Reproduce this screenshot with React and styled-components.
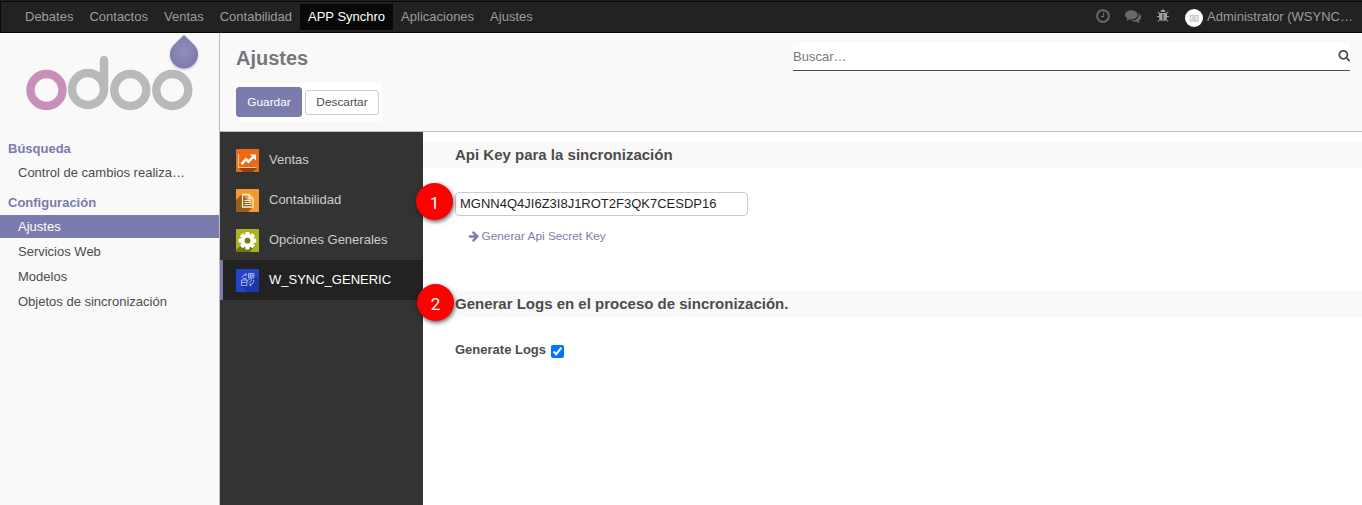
import React from 'react';
import styled, { createGlobalStyle } from 'styled-components';

const GlobalStyle = createGlobalStyle`
  * { box-sizing: border-box; }
  body {
    margin: 0;
    background: #fff;
    color: #4c4c4c;
    font: 13px/20px "Liberation Sans", Arial, sans-serif;
  }
`;

const Page = styled.div`
  display: flex;
  flex-direction: column;
  height: 505px;
  overflow: hidden;
`;

const TopStrip = styled.div`
  flex: none;
  padding-top: 1px;
  background: #222;
`;

const Navbar = styled.nav`
  display: flex;
  justify-content: space-between;
  height: 32px;
  padding: 2px 9px 2px 16px;
  background: #222;
  border: 1px solid #080808;
  border-right: 0;
`;

const NavMenu = styled.div`
  display: flex;
  height: 26px;
`;

const NavItem = styled.a`
  padding: 0 8px;
  line-height: 26px;
  color: ${(p) => (p.$active ? '#fff' : '#9d9d9d')};
  background: ${(p) => (p.$active ? '#080808' : 'transparent')};
`;

const Systray = styled.div`
  display: flex;
  align-items: center;
  height: 26px;
  color: #9d9d9d;
`;

const TrayIcon = styled.span`
  display: flex;
  margin: 0 ${(p) => p.$gap}px 2px 0;
  color: ${(p) => p.$color};
`;

const Avatar = styled.span`
  display: flex;
  width: 18px;
  height: 18px;
  margin: 2px 4px 0 0;
  border-radius: 50%;
  background: #fff;
`;

const Body = styled.div`
  display: flex;
  flex: 1;
  min-height: 0;
`;

const Sidebar = styled.aside`
  flex: none;
  width: 220px;
  background: #f9f9f9;
  border-right: 1px solid #bdbdbd;
`;

const Logo = styled.div`
  height: 103px;
  svg { display: block; }
`;

const SideHeading = styled.div`
  padding: ${(p) => p.$top}px 8px 2px;
  line-height: 20px;
  font-weight: bold;
  color: #7c7bad;
`;

const SideItem = styled.a`
  display: block;
  height: 23px;
  margin-bottom: 2px;
  padding-left: 18px;
  line-height: 23px;
  color: ${(p) => (p.$active ? '#fff' : '#4c4c4c')};
  background: ${(p) => (p.$active ? '#7c7bad' : 'transparent')};
`;

const Main = styled.main`
  display: flex;
  flex-direction: column;
  flex: 1;
  min-width: 0;
`;

const ControlPanel = styled.header`
  display: flex;
  justify-content: space-between;
  flex: none;
  height: 99px;
  padding: 10px 12px 0 16px;
  background: #f9f9f9;
  border-bottom: 1px solid #bdbdbd;
`;

const Title = styled.h1`
  margin: 0 0 10px;
  height: 30px;
  font-size: 20px;
  line-height: 30px;
  color: #777;
`;

const Actions = styled.div`
  display: flex;
  align-items: center;
  gap: 3px;
  width: 146px;
  height: 38px;
  background: #fff;
`;

const Button = styled.button`
  height: ${(p) => (p.$primary ? 30 : 25)}px;
  width: ${(p) => (p.$primary ? 66 : 74)}px;
  padding: 0 0 ${(p) => (p.$primary ? 1 : 0)}px;
  border: 1px solid ${(p) => (p.$primary ? '#7c7bad' : '#ccc')};
  border-radius: 3px;
  background: ${(p) => (p.$primary ? '#7c7bad' : '#fff')};
  color: ${(p) => (p.$primary ? '#fff' : '#4c4c4c')};
  font: 11.84px "Liberation Sans", Arial, sans-serif;
`;

const SearchBox = styled.div`
  display: flex;
  align-items: center;
  justify-content: space-between;
  width: 557px;
  height: 28px;
  background: #fff;
  border-bottom: 1px solid #4c4c4c;
  color: #777;
  svg { margin-bottom: 2px; }
`;

const Content = styled.div`
  display: flex;
  flex: 1;
`;

const TabList = styled.div`
  flex: none;
  width: 203px;
  padding-top: 8px;
  background: #333;
`;

const Tab = styled.div`
  display: flex;
  align-items: center;
  gap: 10px;
  height: 40px;
  padding-left: 13px;
  border-left: 3px solid ${(p) => (p.$active ? '#7c7bad' : 'transparent')};
  background: ${(p) => (p.$active ? '#222' : 'transparent')};
  color: ${(p) => (p.$active ? '#fff' : '#ccc')};
  svg { margin-top: 1px; }
`;

const Settings = styled.section`
  flex: 1;
  padding-top: 10px;
`;

const SectionTitle = styled.h2`
  position: relative;
  height: 26px;
  margin: 0;
  padding-left: 32px;
  background: #f9f9f9;
  font-size: 15px;
  line-height: 26px;
`;

const Field = styled.div`
  position: relative;
  padding: 24px 32px 0;
`;

const KeyInput = styled.input`
  display: block;
  width: 293px;
  height: 24px;
  padding: 0 4px 1px;
  border: 1px solid #ccc;
  border-radius: 4px;
  color: #1f1f1f;
  font: 13px "Liberation Sans", Arial, sans-serif;
`;

const KeyLink = styled.a`
  display: flex;
  align-items: center;
  gap: 1.5px;
  height: 20px;
  margin: 10px 0 45px 13px;
  font-size: 11.84px;
  color: #7c7bad;
`;

const LogField = styled.label`
  display: flex;
  align-items: center;
  gap: 5px;
  height: 20px;
  margin: 23px 0 0 32px;
  font-weight: bold;
`;

const Checkbox = styled.input`
  width: 13px;
  height: 13px;
  margin: 2px 0 0;
`;

const Badge = styled.span`
  position: absolute;
  left: ${(p) => p.$left}px;
  top: ${(p) => p.$top}px;
  width: 37px;
  height: 37px;
  border-radius: 50%;
  background: #f00;
  box-shadow: 1px 2px 4px rgba(0, 0, 0, 0.6);
  color: #fff;
  font: 17px/40px Roboto, sans-serif;
  text-align: center;
`;

const glyphs = {
  clock: 'M1024 544v448q0 14-9 23t-23 9h-320q-14 0-23-9t-9-23v-64q0-14 9-23t23-9h224v-352q0-14 9-23t23-9h64q14 0 23 9t9 23zm416 352q0-148-73-273t-198-198-273-73-273 73-198 198-73 273 73 273 198 198 273 73 273-73 198-198 73-273zm224 0q0 209-103 385.5t-279.5 279.5-385.5 103-385.5-103-279.5-279.5-103-385.5 103-385.5 279.5-279.5 385.5-103 385.5 103 279.5 279.5 103 385.5z',
  comments: 'M1408 768q0 139-94 257t-256.5 186.5-353.5 68.5q-86 0-176-16-124 88-278 128-36 9-86 16h-3q-11 0-20.5-8t-11.5-21q-1-3-1-6.5t.5-6.5 2-6l2.5-5 3.5-5.5 4-5 4.5-5 4-4.5q5-6 23-25t26-29.5 22.5-29 25-38.5 20.5-44q-124-72-195-177t-71-224q0-139 94-257t256.5-186.5 353.5-68.5 353.5 68.5 256.5 186.5 94 257zm384 256q0 120-71 224.5t-195 176.5q10 24 20.5 44t25 38.5 22.5 29 26 29.5 23 25q1 1 4 4.5t4.5 5 4 5 3.5 5.5l2.5 5 2 6 .5 6.5-1 6.5q-3 14-13 22t-22 7q-50-7-86-16-154-40-278-128-90 16-176 16-271 0-472-132 58 4 88 4 161 0 309-45t264-129q125-92 192-212t67-254q0-77-23-152 129 71 204 178t75 230z',
  bug: 'M1696 960q0 26-19 45t-45 19h-224q0 171-67 290l208 209q19 19 19 45t-19 45q-18 19-45 19t-45-19l-198-197q-5 5-15 13t-42 28.5-65 36.5-82 29-97 13v-896h-128v896q-51 0-101.5-13.5t-87-33-66-39-43.5-32.5l-15-14-183 207q-20 21-48 21-24 0-43-16-19-18-20.5-44.5t15.5-46.5l202-227q-58-114-58-274h-224q-26 0-45-19t-19-45 19-45 45-19h224v-294l-173-173q-19-19-19-45t19-45 45-19 45 19l173 173h844l173-173q19-19 45-19t45 19 19 45-19 45l-173 173v294h224q26 0 45 19t19 45zm-480-576h-640q0-133 93.5-226.5t226.5-93.5 226.5 93.5 93.5 226.5z',
  arrow: 'M1600 960q0 54-37 91l-651 651q-39 37-91 37-51 0-90-37l-75-75q-38-38-38-91t38-91l293-293h-704q-52 0-84.5-37.5t-32.5-90.5v-128q0-53 32.5-90.5t84.5-37.5h704l-293-294q-38-36-38-90t38-90l75-75q38-38 90-38 53 0 91 38l651 651q37 35 37 90z',
  search: 'M1216 832q0-185-131.5-316.5t-316.5-131.5-316.5 131.5-131.5 316.5 131.5 316.5 316.5 131.5 316.5-131.5 131.5-316.5zm512 832q0 52-38 90t-90 38q-54 0-90-38l-343-342q-179 124-399 124-143 0-273.5-55.5t-225-150-150-225-55.5-273.5 55.5-273.5 150-225 225-150 273.5-55.5 273.5 55.5 225 150 150 225 55.5 273.5q0 220-124 399l343 343q37 37 37 90z',
};

const Glyph = ({ name, size = 16, color = 'currentColor' }) => (
  <svg width={size} height={size} viewBox="0 0 1792 1792" fill={color} overflow="visible">
    <path d={glyphs[name]} />
  </svg>
);

const OdooLogo = () => (
  <svg width="219" height="103" viewBox="0 33 219 103" fill="none">
    <defs>
      <radialGradient id="drop"><stop offset="0" stopColor="#918eb9" /><stop offset="1" stopColor="#7c7bad" /></radialGradient>
      <filter id="soft" x="-30%" y="-30%" width="160%" height="160%">
        <feDropShadow dx="0" dy="1" stdDeviation="1" floodOpacity="0.25" />
      </filter>
    </defs>
    <g strokeWidth="8.4">
      <circle cx="46.5" cy="90" r="16" stroke="#c88fb9" />
      <g stroke="#b8bab9">
        <circle cx="88" cy="89" r="16" />
        <circle cx="130.3" cy="90" r="16" />
        <circle cx="172.3" cy="90" r="16" />
        <path d="M104 89V60" strokeLinecap="round" />
      </g>
    </g>
    <path d="M184 35L194.5 45.2A14 14 0 1 1 173.5 45.2Z" fill="url(#drop)" filter="url(#soft)" />
  </svg>
);

const AppIcon = ({ kind }) => {
  const fills = { sales: '#ec6a13', accounting: '#f29a2e', general: '#abb31f', sync: '#2444c8' };
  return (
    <svg width="23" height="23" viewBox="0 0 23 23" fill="none">
      <rect width="23" height="23" fill={fills[kind]} />
      {kind === 'sales' && (
        <>
          <path d="M3 19H21L17 23H7Z" fill="#8f4510" />
          <path d="M2.5 5V18.5H20.5" stroke="#f3c5a5" strokeWidth="1.2" />
          <path d="M5.5 15.2L10 10.2L12.5 12.7L17 8.2" stroke="#fff" strokeWidth="2.5" />
          <path d="M14 5.5H20V11.5Z" fill="#fff" />
        </>
      )}
      {kind === 'accounting' && (
        <>
          <path d="M6 5L0 11V23H12L17 18Z" fill="#99601d" />
          <path d="M6.5 5.5H13L17 9.5V18H6.500ZM13 5.500V9.500H17" stroke="#fbecd4" strokeWidth="1.3" />
          <path d="M8.500 11.500H15M8.500 13.500H15M8.500 15.500H15" stroke="#fbecd4" strokeWidth="1" />
        </>
      )}
      {kind === 'general' && (
        <>
          <path d="M5 16L0 21V23H14L19 17Z" fill="#6f780f" />
          {[0, 45, 90, 135].map((turn) => (
            <rect key={turn} x="9.4" y="2.9" width="4.2" height="17.6" rx="1" fill="#fff" transform={`rotate(${turn} 11.5 11.7)`} />
          ))}
          <circle cx="11.5" cy="11.7" r="6.8" fill="#fff" />
          <circle cx="11.5" cy="11.7" r="2.9" fill="#747d10" />
        </>
      )}
      {kind === 'sync' && (
        <>
          <path d="M5 17L18 5L23 10V23H11Z" fill="#1c37a5" />
          <g stroke="#a9b8ee" strokeWidth=".9">
            <path d="M12.5 4.5H18V9H12.5ZM12.5 6.7H18M14.3 4.5V9M16.2 4.5V9" />
            <path d="M5.5 11H11V16.5H5.5ZM5.5 13.5H11M7 9.5H10V11" />
            <path d="M6 8.5Q6.5 5.5 10.5 5.5M9 4.5L10.8 5.5L9.2 7M18 11Q17.5 15.5 13.5 16M15 14.3L13.5 16L15.5 17M11 12L14.5 9.5L16 11L12.5 14" />
          </g>
        </>
      )}
    </svg>
  );
};

const navItems = ['Debates', 'Contactos', 'Ventas', 'Contabilidad', 'APP Synchro', 'Aplicaciones', 'Ajustes'];
const configItems = ['Ajustes', 'Servicios Web', 'Modelos', 'Objetos de sincronización'];
const tabs = [
  ['sales', 'Ventas'],
  ['accounting', 'Contabilidad'],
  ['general', 'Opciones Generales'],
  ['sync', 'W_SYNC_GENERIC'],
];

export default function App() {
  return (
    <Page>
      <GlobalStyle />
      <TopStrip>
        <Navbar>
          <NavMenu>
            {navItems.map((item) => (
              <NavItem key={item} $active={item === 'APP Synchro'}>{item}</NavItem>
            ))}
          </NavMenu>
          <Systray>
            <TrayIcon $color="#696969" $gap={14}><Glyph name="clock" /></TrayIcon>
            <TrayIcon $color="#696969" $gap={15}><Glyph name="comments" /></TrayIcon>
            <TrayIcon $color="#9d9d9d" $gap={15}><Glyph name="bug" size={14} /></TrayIcon>
            <Avatar>
              <svg width="18" height="18" fill="none" stroke="#ccc" strokeWidth="1.6">
                <path d="M5.5 6.5H13V12H5.5Z" />
                <circle cx="9.2" cy="9.3" r="1.4" />
              </svg>
            </Avatar>
            Administrator (WSYNC…
          </Systray>
        </Navbar>
      </TopStrip>
      <Body>
        <Sidebar>
          <Logo><OdooLogo /></Logo>
          <SideHeading $top={3}>Búsqueda</SideHeading>
          <SideItem>Control de cambios realiza…</SideItem>
          <SideHeading $top={7}>Configuración</SideHeading>
          {configItems.map((item) => (
            <SideItem key={item} $active={item === 'Ajustes'}>{item}</SideItem>
          ))}
        </Sidebar>
        <Main>
          <ControlPanel>
            <div>
              <Title>Ajustes</Title>
              <Actions>
                <Button $primary>Guardar</Button>
                <Button>Descartar</Button>
              </Actions>
            </div>
            <SearchBox>
              Buscar…
              <Glyph name="search" size={12.5} color="#4c4c4c" />
            </SearchBox>
          </ControlPanel>
          <Content>
            <TabList>
              {tabs.map(([kind, label]) => (
                <Tab key={kind} $active={kind === 'sync'}>
                  <AppIcon kind={kind} />
                  {label}
                </Tab>
              ))}
            </TabList>
            <Settings>
              <SectionTitle>Api Key para la sincronización</SectionTitle>
              <Field>
                <KeyInput defaultValue="MGNN4Q4JI6Z3I8J1ROT2F3QK7CESDP16" />
                <KeyLink><Glyph name="arrow" size={12} />Generar Api Secret Key</KeyLink>
                <Badge $left={-7} $top={15}>1</Badge>
              </Field>
              <SectionTitle>
                Generar Logs en el proceso de sincronización.
                <Badge $left={-6} $top={-7}>2</Badge>
              </SectionTitle>
              <LogField>Generate Logs<Checkbox type="checkbox" defaultChecked /></LogField>
            </Settings>
          </Content>
        </Main>
      </Body>
    </Page>
  );
}
